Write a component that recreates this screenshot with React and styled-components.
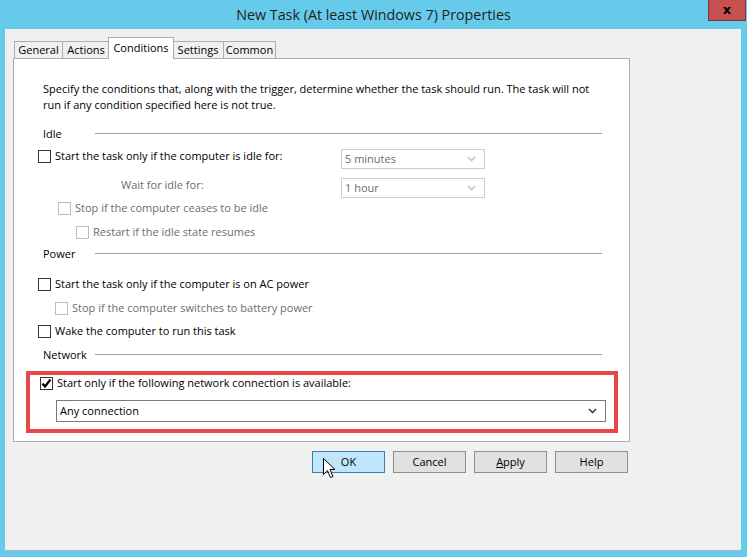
import React from "react";
import styled, { createGlobalStyle } from "styled-components";

const Global = createGlobalStyle`
  html, body { margin: 0; padding: 0; }
  body { font-family: "Open Sans", "Noto Sans", sans-serif; }
  * { box-sizing: border-box; }
`;

const FONT = `"Open Sans", "Noto Sans", sans-serif`;

const Window = styled.div`
  position: relative;
  width: 747px;
  height: 557px;
  background: #66cbea;
  display: flex;
  flex-direction: column;
  overflow: hidden;
  font-family: ${FONT};
`;

const TitleBar = styled.div`
  height: 29px;
  display: grid;
  grid-template-columns: 1fr auto 1fr;
  align-items: start;
`;

const Title = styled.div`
  grid-column: 2;
  padding-top: 5px;
  font-size: 14.3px;
  line-height: 20px;
  color: #1e1e1e;
  white-space: nowrap;
`;

const CloseButton = styled.div`
  grid-column: 3;
  justify-self: end;
  margin-right: 1px;
  width: 38px;
  height: 21px;
  background: #c75050;
  border: 1px solid #7d3535;
  border-top: none;
  display: flex;
  align-items: center;
  justify-content: center;
  font-family: "DejaVu Sans", sans-serif;
  font-weight: bold;
  font-size: 13px;
  color: #000;
  padding-bottom: 2px;
`;

const Client = styled.div`
  margin: 0 6px 0 5px;
  height: 522px;
  background: #f0f0f0;
  border-bottom: 1px solid #a9b6bd;
  padding: 8px 0 0 8px;
  display: flex;
  flex-direction: column;
  font-size: 11px;
  color: #000;
`;

const TabStrip = styled.div`
  display: flex;
  align-items: flex-end;
  margin-left: 1px;
  margin-bottom: -1px;
  height: 22px;
`;

const Tab = styled.div`
  position: relative;
  width: ${(p) => p.$w}px;
  height: ${(p) => (p.$selected ? 22 : 17)}px;
  margin-bottom: ${(p) => (p.$selected ? 0 : 1)}px;
  margin-left: ${(p) => (p.$selected ? -2 : p.$first ? 0 : -1)}px;
  margin-right: ${(p) => (p.$selected ? -1 : 0)}px;
  z-index: ${(p) => (p.$selected ? 2 : 1)};
  background: ${(p) => (p.$selected ? "#ffffff" : "#f0f0f0")};
  border: 1px solid #adadad;
  border-bottom: none;
  display: flex;
  justify-content: center;
  padding-top: ${(p) => (p.$selected ? 2 : 0)}px;
  font-size: 11px;
  line-height: 16px;
  white-space: nowrap;
`;

const Panel = styled.div`
  position: relative;
  z-index: 1;
  width: 617px;
  height: 384px;
  background: #ffffff;
  border: 1px solid #adadad;
  padding: 22px 27px 0 0;
  display: flex;
  flex-direction: column;
`;

const Intro = styled.p`
  margin: 0 0 0 29px;
  line-height: 16px;
  white-space: nowrap;
`;

const SectionHeader = styled.div`
  display: flex;
  align-items: center;
  height: 16px;
  margin-top: ${(p) => p.$mt}px;
  padding-left: 29px;
  line-height: 16px;
`;

const SectionLabel = styled.span`
  width: 52px;
  flex: none;
`;

const SectionRule = styled.div`
  flex: 1;
  height: 1px;
  margin-top: -1px;
  background: #a0a0a0;
`;

const Row = styled.div`
  display: flex;
  align-items: flex-start;
  margin-top: ${(p) => p.$mt}px;
  padding-left: ${(p) => p.$indent}px;
`;

const CheckItem = styled.label`
  display: flex;
  align-items: center;
  height: 14px;
  gap: 4px;
  color: ${(p) => (p.$disabled ? "#6d6d6d" : "#000")};
  white-space: nowrap;
  line-height: 14px;
`;

const Box = styled.span`
  width: 13px;
  height: 13px;
  flex: none;
  background: #fff;
  border: 1px solid ${(p) => (p.$disabled ? "#bcbcbc" : "#333333")};
  display: flex;
  align-items: center;
  justify-content: center;
`;

const CheckLabel = styled.span`
  width: ${(p) => (p.$w ? `${p.$w}px` : "auto")};
  flex: none;
`;

const PlainLabel = styled.span`
  color: #6d6d6d;
  line-height: 14px;
  width: ${(p) => p.$w}px;
  flex: none;
  white-space: nowrap;
`;

const Select = styled.div`
  width: ${(p) => p.$w}px;
  height: ${(p) => p.$h}px;
  margin-left: ${(p) => p.$ml || 0}px;
  margin-top: ${(p) => p.$mt || 0}px;
  background: #fff;
  border: 1px solid ${(p) => (p.$disabled ? "#cccccc" : "#7a7a7a")};
  color: ${(p) => (p.$disabled ? "#6d6d6d" : "#000")};
  display: flex;
  align-items: center;
  justify-content: space-between;
  padding: 0 8px 0 3px;
  line-height: 14px;
  white-space: nowrap;
`;

const Highlight = styled.div`
  margin: 8px 0 0 12px;
  width: 592px;
  height: 62px;
  border: 4px solid #e84848;
  padding: 1px 8px 0 10px;
  display: flex;
  flex-direction: column;
`;

const ButtonRow = styled.div`
  width: 617px;
  display: flex;
  justify-content: flex-end;
  gap: 8px;
  padding-right: 2px;
  margin-top: 9px;
`;

const Button = styled.div`
  width: 73px;
  height: 22px;
  background: ${(p) => (p.$hot ? "#bee6fd" : "#e1e1e1")};
  border: 1px solid ${(p) => (p.$hot ? "#3c7fb1" : "#8f8f8f")};
  display: flex;
  align-items: center;
  justify-content: center;
  font-size: 11px;
  line-height: 14px;
  color: #000;
`;

const Cursor = styled.svg`
  position: absolute;
  left: 323px;
  top: 458px;
  z-index: 5;
`;

const Chevron = ({ disabled }) => (
  <svg width="9" height="6" viewBox="0 0 9 6">
    <polyline
      points="1,1 4.5,4.5 8,1"
      fill="none"
      stroke={disabled ? "#c4c4c4" : "#404040"}
      strokeWidth="1.6"
    />
  </svg>
);

const Check = ({ checked, disabled, label, w }) => (
  <CheckItem $disabled={disabled}>
    <Box $disabled={disabled}>
      {checked && (
        <svg width="11" height="11" viewBox="0 0 11 11">
          <polyline points="1.5,5.5 4,8.5 9.5,1.5" fill="none" stroke="#000" strokeWidth="2.2" />
        </svg>
      )}
    </Box>
    <CheckLabel $w={w}>{label}</CheckLabel>
  </CheckItem>
);

const tabs = [
  { name: "General", w: 49 },
  { name: "Actions", w: 48 },
  { name: "Conditions", w: 66, selected: true },
  { name: "Settings", w: 52 },
  { name: "Common", w: 53 },
];

export default function App() {
  return (
    <>
      <Global />
      <Window>
        <TitleBar>
          <Title>New Task (At least Windows 7) Properties</Title>
          <CloseButton>x</CloseButton>
        </TitleBar>
        <Client>
          <TabStrip>
            {tabs.map((t, i) => (
              <Tab key={t.name} $w={t.w} $selected={t.selected} $first={i === 0}>
                {t.name}
              </Tab>
            ))}
          </TabStrip>
          <Panel>
            <Intro>
              Specify the conditions that, along with the trigger, determine whether the task should run. The task will not
              <br />
              run if any condition specified here is not true.
            </Intro>

            <SectionHeader $mt={13}>
              <SectionLabel>Idle</SectionLabel>
              <SectionRule />
            </SectionHeader>
            <Row $mt={7} $indent={24}>
              <Check label="Start the task only if the computer is idle for:" w={286} />
              <Select $w={144} $h={20} $disabled>
                5 minutes
                <Chevron disabled />
              </Select>
            </Row>
            <Row $mt={9} $indent={107}>
              <PlainLabel $w={220}>Wait for idle for:</PlainLabel>
              <Select $w={144} $h={20} $disabled>
                1 hour
                <Chevron disabled />
              </Select>
            </Row>
            <Row $mt={3} $indent={44}>
              <Check disabled label="Stop if the computer ceases to be idle" />
            </Row>
            <Row $mt={10} $indent={62}>
              <Check disabled label="Restart if the idle state resumes" />
            </Row>

            <SectionHeader $mt={7}>
              <SectionLabel>Power</SectionLabel>
              <SectionRule />
            </SectionHeader>
            <Row $mt={15} $indent={24}>
              <Check label="Start the task only if the computer is on AC power" />
            </Row>
            <Row $mt={10} $indent={41}>
              <Check disabled label="Stop if the computer switches to battery power" />
            </Row>
            <Row $mt={9} $indent={24}>
              <Check label="Wake the computer to run this task" />
            </Row>

            <SectionHeader $mt={9}>
              <SectionLabel>Network</SectionLabel>
              <SectionRule />
            </SectionHeader>
            <Highlight>
              <Row $mt={0} $indent={0}>
                <Check checked label="Start only if the following network connection is available:" />
              </Row>
              <Select $w={550} $h={22} $ml={16} $mt={10}>
                Any connection
                <Chevron />
              </Select>
            </Highlight>
          </Panel>
          <ButtonRow>
            <Button $hot>OK</Button>
            <Button>Cancel</Button>
            <Button>
              <span>
                <u>A</u>pply
              </span>
            </Button>
            <Button>Help</Button>
          </ButtonRow>
        </Client>
        <Cursor width="13" height="21" viewBox="0 0 13 21">
          <path
            d="M0.5,0.5 L0.5,16.5 L4.5,12.5 L7.5,19.5 L10,18.5 L7,11.5 L12,11.5 Z"
            fill="#fff"
            stroke="#000"
            strokeWidth="1"
            strokeLinejoin="miter"
          />
        </Cursor>
      </Window>
    </>
  );
}
